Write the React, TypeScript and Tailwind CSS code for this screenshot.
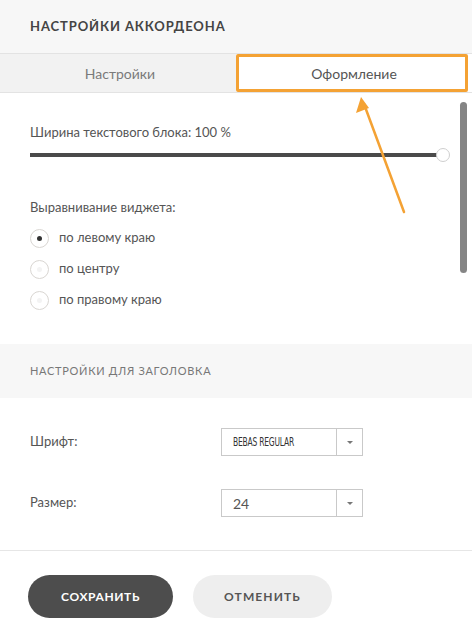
import React from "react";

const font = { fontFamily: "Lato, 'Open Sans', 'DejaVu Sans', sans-serif" };

function Radio({ checked, label }: { checked?: boolean; label: string }) {
  return (
    <div className="flex items-center h-5">
      <div className="w-[19px] h-[19px] rounded-full border border-[#d9d6d2] flex items-center justify-center">
        <div className={checked ? "w-[5px] h-[5px] rounded-full bg-[#333]" : "w-[5px] h-[5px] rounded-full bg-[#f3f3f3]"} />
      </div>
      <span className="ml-[10px] text-[13px] text-[#555]">{label}</span>
    </div>
  );
}

function Select({ children }: { children: React.ReactNode }) {
  return (
    <div className="flex w-[142px] h-[28px] border border-[#c9c9c9] bg-white">
      <div className="flex-1 flex items-center pl-[11px]">{children}</div>
      <div className="w-[26px] border-l border-[#c9c9c9] flex items-center justify-center">
        <div className="w-0 h-0 border-l-[3px] border-r-[3px] border-t-[3px] border-l-transparent border-r-transparent border-t-[#777]" />
      </div>
    </div>
  );
}

export default function App() {
  return (
    <div className="relative w-[472px] h-[638px] bg-white overflow-hidden" style={font}>
      <div className="h-[54px] bg-[#f7f7f7] border-b border-[#e3e3e3] flex items-center pl-[30px]">
        <span className="text-[13px] font-bold tracking-[0.9px] text-[#444]">НАСТРОЙКИ АККОРДЕОНА</span>
      </div>
      <div className="flex h-[39px] border-b border-[#e3e3e3]">
        <div className="w-[236px] bg-[#f2f2f2] flex items-center justify-center text-[14px] text-[#7a7a7a] pl-[4px]">Настройки</div>
        <div className="flex-1 bg-white flex items-center justify-center text-[14px] text-[#555]">Оформление</div>
      </div>

      <div className="pl-[30px] pt-[30px] pb-[34px]">
        <div className="h-5 flex items-center text-[13px] text-[#555]">Ширина текстового блока: 100 %</div>
        <div className="relative mt-1 h-4 w-[420px] flex items-center">
          <div className="w-[407px] h-[4px] bg-[#4a4a4a]" />
          <div className="absolute left-[406px] top-[1px] w-[14px] h-[14px] rounded-full border border-[#cfcfcf] bg-white" />
        </div>
        <div className="mt-[35px] h-5 flex items-center text-[13px] text-[#555]">Выравнивание виджета:</div>
        <div className="mt-[10px] flex flex-col gap-[11px]">
          <Radio checked label="по левому краю" />
          <Radio label="по центру" />
          <Radio label="по правому краю" />
        </div>
      </div>

      <div className="h-[54px] bg-[#f7f7f7] flex items-center pl-[30px]">
        <span className="text-[11px] tracking-[0.7px] text-[#777]">НАСТРОЙКИ ДЛЯ ЗАГОЛОВКА</span>
      </div>

      <div className="pt-[30px] pb-[33px] border-b border-[#e6e6e6]">
        <div className="flex items-center h-[28px] pl-[30px]">
          <span className="w-[191px] text-[13px] text-[#555]">Шрифт:</span>
          <Select>
            <span className="text-[12px] text-[#333] tracking-[-0.3px] inline-block origin-left scale-x-[0.7]" style={{ fontFamily: "'DejaVu Sans Condensed', 'DejaVu Sans', sans-serif" }}>BEBAS REGULAR</span>
          </Select>
        </div>
        <div className="flex items-center h-[28px] pl-[30px] mt-[33px]">
          <span className="w-[191px] text-[13px] text-[#555]">Размер:</span>
          <Select>
            <span className="text-[14px] text-[#555]">24</span>
          </Select>
        </div>
      </div>

      <div className="flex pl-[28px] pt-[24px] gap-[20px]">
        <button className="w-[145px] h-[43px] rounded-full bg-[#4d4d4d] text-white text-[12px] font-bold tracking-[0.6px]">СОХРАНИТЬ</button>
        <button className="w-[139px] h-[43px] rounded-full bg-[#eeeeee] text-[#555] text-[12px] font-bold tracking-[1.1px]">ОТМЕНИТЬ</button>
      </div>

      {/* overlays */}
      <div className="absolute left-[460px] top-[102px] w-[7px] h-[171px] rounded-full bg-[#858585]" />
      <div className="absolute left-[236px] top-[54px] w-[232px] h-[38px] border-[3px] border-[#f4a234] rounded-[2px]" />
      <svg className="absolute left-0 top-0" width="472" height="638" viewBox="0 0 472 638">
        <line x1="404" y1="212" x2="364" y2="104" stroke="#f4a234" strokeWidth="2.5" strokeLinecap="round" />
        <polygon points="361,97 356,113 369,108" fill="#f4a234" />
      </svg>
    </div>
  );
}
